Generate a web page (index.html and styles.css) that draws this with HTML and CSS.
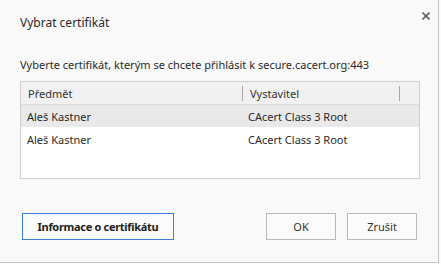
FILE: index.html
```html
<!DOCTYPE html>
<html lang="cs">
<head>
    <meta charset="UTF-8">
    <title>Vybrat certifikát</title>
    <link rel="stylesheet" href="styles.css">
</head>
<body>

<div class="dialog">
    <h1 class="title">Vybrat certifikát</h1>
    <button class="close-button" aria-label="Zavřít">
        <svg width="8" height="8" viewBox="0 0 8 8">
            <path d="M0.5 0.5 L7.5 7.5 M7.5 0.5 L0.5 7.5" stroke="#5f5f5f" stroke-width="1.6" fill="none"/>
        </svg>
    </button>

    <p class="message">Vyberte certifikát, kterým se chcete přihlásit k secure.cacert.org:443</p>

    <div class="cert-list">
        <div class="cert-head">
            <div class="col-subject">Předmět</div>
            <span class="sep"></span>
            <div class="col-issuer">Vystavitel</div>
            <span class="sep"></span>
        </div>
        <div class="cert-row selected">
            <div class="col-subject">Aleš Kastner</div>
            <div class="col-issuer">CAcert Class 3 Root</div>
        </div>
        <div class="cert-row">
            <div class="col-subject">Aleš Kastner</div>
            <div class="col-issuer">CAcert Class 3 Root</div>
        </div>
    </div>

    <div class="actions">
        <button class="btn btn-info">Informace o certifikátu</button>
        <button class="btn btn-ok">OK</button>
        <button class="btn btn-cancel">Zrušit</button>
    </div>
</div>

</body>
</html>
```

FILE: styles.css
```css
body {
    margin: 0;
    padding: 0;
    background-color: #fbfbfb;
    font-family: "Noto Sans", "Open Sans", Arial, sans-serif;
    color: #222;
}

.dialog {
    position: relative;
    width: 438px;
    height: 262px;
    background-color: #f9f9f9;
    border-right: 1px solid #c4c4c4;
    border-bottom: 1px solid #c4c4c4;
}

.title {
    margin: 0;
    padding: 15px 0 0 20px;
    font-size: 12px;
    line-height: 16px;
    font-weight: normal;
    color: #2a2a2a;
}

.close-button {
    position: absolute;
    top: 12px;
    left: 422px;
    width: 8px;
    height: 8px;
    padding: 0;
    border: none;
    background: none;
    display: flex;
}

.message {
    margin: 26px 0 0 20px;
    font-size: 11px;
    line-height: 15px;
    color: #2a2a2a;
}

.cert-list {
    box-sizing: border-box;
    margin: 9px 0 0 20px;
    width: 400px;
    height: 98px;
    border: 1px solid #cfcfcf;
    background-color: #fff;
    font-size: 11px;
    color: #2a2a2a;
}

.cert-head,
.cert-row {
    display: flex;
    align-items: center;
    height: 22px;
}

.cert-head {
    background-color: #f1f1f1;
    border-bottom: 1px solid #dcdcdc;
    color: #333;
}

.cert-row {
    margin-bottom: 1px;
}

.cert-row.selected {
    background-color: #e9e9e9;
}

.col-subject {
    width: 214px;
    padding-left: 7px;
}

.col-issuer {
    width: 149px;
    padding-left: 7px;
}

.cert-row .col-subject {
    width: 215px;
    padding-left: 6px;
}

.cert-row .col-issuer {
    padding-left: 6px;
}

.sep {
    width: 1px;
    height: 15px;
    background-color: #a9a9a9;
}

.actions {
    display: flex;
    gap: 11px;
    margin: 34px 0 0 22px;
}

.btn {
    box-sizing: border-box;
    height: 27px;
    width: 70px;
    font-family: inherit;
    font-size: 11px;
    color: #333;
    background-color: #fbfbfb;
    border: 1px solid #b9b9b9;
    border-radius: 0;
    padding: 0;
}

.btn-info {
    width: 152px;
    margin-right: 81px;
    font-weight: bold;
    letter-spacing: -0.3px;
    color: #222;
    border-color: #3d7fd6;
}
```
